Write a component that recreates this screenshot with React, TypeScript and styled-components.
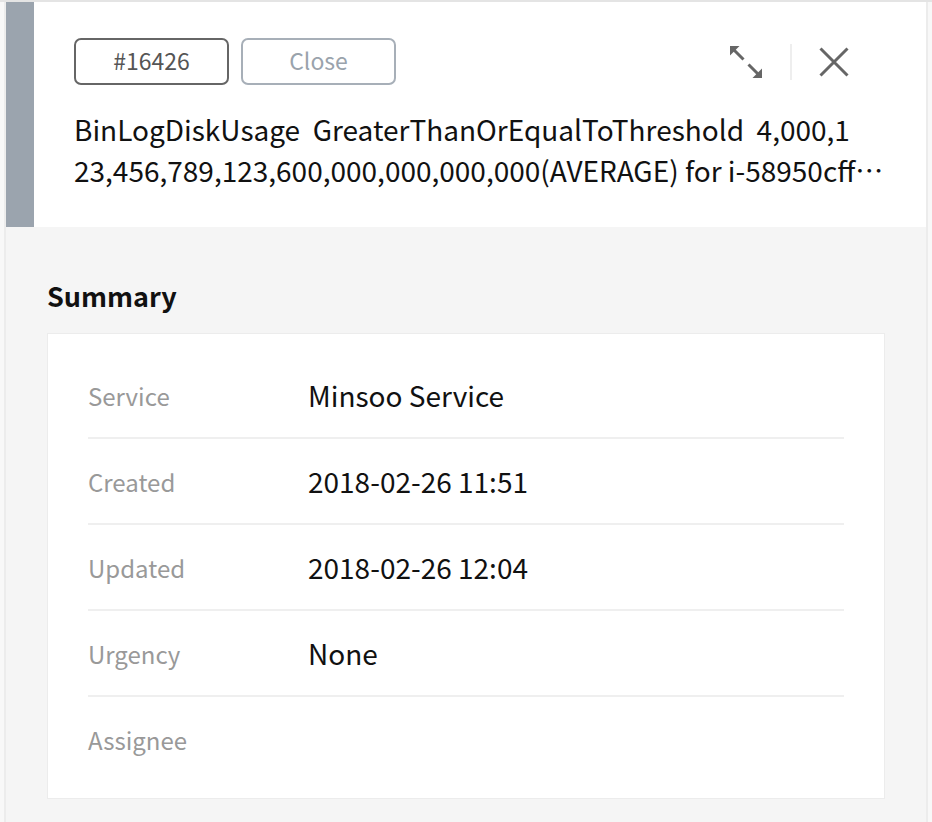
import React from "react";
import styled, { createGlobalStyle } from "styled-components";

const GlobalStyle = createGlobalStyle`
  html, body {
    margin: 0;
    padding: 0;
    background: #f8f8f8;
  }
  body {
    font-family: "Noto Sans CJK KR", "Noto Sans", sans-serif;
    color: #111;
  }
`;

const Page = styled.div`
  border-top: 2px solid #e4e4e4;
  padding: 0 4px;
  min-height: 820px;
  display: flex;
`;

const Panel = styled.div`
  flex: 1;
  display: flex;
  flex-direction: column;
  background: #f5f5f5;
  border-left: 2px solid #ececec;
  border-right: 2px solid #ececec;
`;

const Header = styled.div`
  background: #fff;
  border-left: 28px solid #9ba4ae;
  padding: 36px 30px 36px 40px;
`;

const TopRow = styled.div`
  display: flex;
  align-items: center;
  justify-content: space-between;
`;

const Tags = styled.div`
  display: flex;
  gap: 12px;
`;

const Tag = styled.button<{ muted?: boolean }>`
  width: 155px;
  height: 47px;
  box-sizing: border-box;
  border: 2px solid ${(props) => (props.muted ? "#a7afb8" : "#666")};
  border-radius: 7px;
  background: #fff;
  color: ${(props) => (props.muted ? "#9aa3ac" : "#555")};
  font-family: inherit;
  font-size: 23px;
  line-height: 1;
  padding: 0 0 2px;
  cursor: pointer;
`;

const Actions = styled.div`
  display: flex;
  align-items: center;
  margin-right: 47px;
`;

const IconButton = styled.button`
  display: flex;
  border: none;
  background: none;
  padding: 0;
  cursor: pointer;
`;

const Divider = styled.span`
  width: 2px;
  height: 36px;
  background: #eee;
  margin: 0 27px 0 28px;
`;

const Title = styled.div`
  margin-top: 24px;
  font-size: 28px;
  line-height: 41px;
  white-space: pre-wrap;
  word-break: break-all;
  display: -webkit-box;
  -webkit-line-clamp: 2;
  -webkit-box-orient: vertical;
  overflow: hidden;
`;

const Body = styled.div`
  flex: 1;
  padding: 51px 41px 24px;
`;

const SectionTitle = styled.h2`
  margin: 0 0 19px;
  font-size: 27px;
  line-height: 36px;
  font-weight: 700;
  color: #111;
`;

const Card = styled.div`
  background: #fff;
  border: 1px solid #ececec;
  padding: 19px 40px 17px;
`;

const Row = styled.div`
  display: grid;
  grid-template-columns: 220px 1fr;
  align-items: center;
  height: 86px;
  box-sizing: border-box;
  border-bottom: 2px solid #efefef;

  &:last-child {
    height: 84px;
    border-bottom: none;
  }
`;

const Label = styled.span`
  font-size: 24px;
  color: #999;
`;

const Value = styled.span`
  font-size: 28px;
  color: #111;
`;

const ExpandIcon = () => (
  <svg width="32" height="32" viewBox="0 0 32 32" fill="none">
    <path d="M0 0h9.5L0 9.5z" fill="#666" />
    <path d="M3 3l10.5 10.5" stroke="#666" strokeWidth="3" />
    <path d="M32 32h-9.5L32 22.5z" fill="#666" />
    <path d="M29 29L18.5 18.5" stroke="#666" strokeWidth="3" />
  </svg>
);

const CloseIcon = () => (
  <svg width="30" height="30" viewBox="0 0 30 30" fill="none">
    <path d="M1.5 1.5l27 27M28.5 1.5l-27 27" stroke="#666" strokeWidth="3" />
  </svg>
);

const summary = [
  { label: "Service", value: "Minsoo Service" },
  { label: "Created", value: "2018-02-26 11:51" },
  { label: "Updated", value: "2018-02-26 12:04" },
  { label: "Urgency", value: "None" },
  { label: "Assignee", value: "" },
];

const App = () => (
  <>
    <GlobalStyle />
    <Page>
      <Panel>
        <Header>
          <TopRow>
            <Tags>
              <Tag>#16426</Tag>
              <Tag muted>Close</Tag>
            </Tags>
            <Actions>
              <IconButton aria-label="expand">
                <ExpandIcon />
              </IconButton>
              <Divider />
              <IconButton aria-label="close">
                <CloseIcon />
              </IconButton>
            </Actions>
          </TopRow>
          <Title>
            {"BinLogDiskUsage  GreaterThanOrEqualToThreshold  4,000,1\n23,456,789,123,600,000,000,000,000(AVERAGE) for i-58950cff1234567890"}
          </Title>
        </Header>
        <Body>
          <SectionTitle>Summary</SectionTitle>
          <Card>
            {summary.map((item) => (
              <Row key={item.label}>
                <Label>{item.label}</Label>
                <Value>{item.value}</Value>
              </Row>
            ))}
          </Card>
        </Body>
      </Panel>
    </Page>
  </>
);

export default App;
